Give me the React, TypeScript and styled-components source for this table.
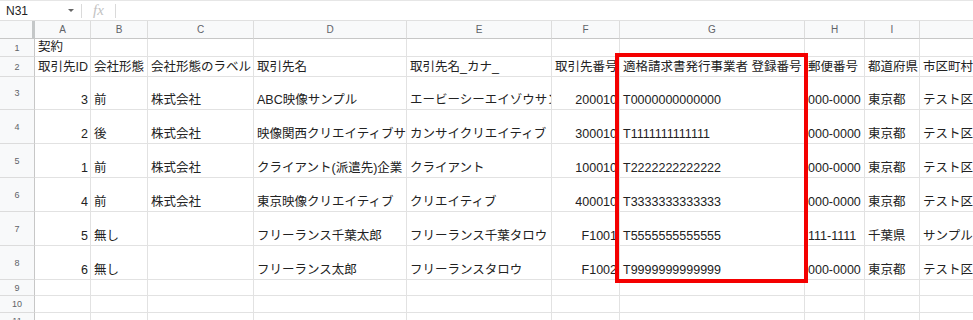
import styled, { createGlobalStyle } from 'styled-components';

const GlobalStyle = createGlobalStyle`
  html, body {
    margin: 0;
    padding: 0;
    background: #fff;
  }
  body {
    font-family: "Liberation Sans", "Noto Sans CJK JP", Arial, sans-serif;
    color: #222;
  }
`;

const columns = ['A', 'B', 'C', 'D', 'E', 'F', 'G', 'H', 'I', 'J'];
const colWidths = [56, 57, 106, 153, 145, 68, 185, 60, 55, 120];
const rowHeights = [18, 20, 33, 34, 34, 34, 34, 34, 16, 17, 17];

// right aligned columns: A (id), F (番号)
const rightCols = new Set([0, 5]);

const rows: string[][] = [
  ['契約'],
  ['取引先ID', '会社形態', '会社形態のラベル', '取引先名', '取引先名_カナ_', '取引先番号', '適格請求書発行事業者 登録番号', '郵便番号', '都道府県', '市区町村'],
  ['3', '前', '株式会社', 'ABC映像サンプル', 'エービーシーエイゾウサンプル', '200010', 'T0000000000000', '000-0000', '東京都', 'テスト区'],
  ['2', '後', '株式会社', '映像関西クリエイティブサンプル', 'カンサイクリエイティブ', '300010', 'T1111111111111', '000-0000', '東京都', 'テスト区'],
  ['1', '前', '株式会社', 'クライアント(派遣先)企業', 'クライアント', '100010', 'T2222222222222', '000-0000', '東京都', 'テスト区'],
  ['4', '前', '株式会社', '東京映像クリエイティブ', 'クリエイティブ', '400010', 'T3333333333333', '000-0000', '東京都', 'テスト区'],
  ['5', '無し', '', 'フリーランス千葉太郎', 'フリーランス千葉タロウ', 'F1001', 'T5555555555555', '111-1111', '千葉県', 'サンプル市'],
  ['6', '無し', '', 'フリーランス太郎', 'フリーランスタロウ', 'F1002', 'T9999999999999', '000-0000', '東京都', 'テスト区'],
  [],
  [],
  [],
];

const Sheet = styled.div`
  position: relative;
  width: 973px;
  height: 320px;
  overflow: hidden;
  background: #fff;
`;

const FormulaBar = styled.div`
  display: flex;
  align-items: center;
  height: 21px;
  box-sizing: border-box;
  border-top: 1px solid #e6e6e6;
  border-bottom: 1px solid #e0e0e0;
`;

const NameBox = styled.div`
  width: 62px;
  padding-left: 6px;
  font-size: 12px;
  color: #222;
`;

const Caret = styled.span`
  width: 0;
  height: 0;
  margin-right: 7px;
  border-left: 3px solid transparent;
  border-right: 3px solid transparent;
  border-top: 3px solid #666;
`;

const Divider = styled.span`
  width: 1px;
  height: 14px;
  background: #dadada;
`;

const Fx = styled.span`
  width: 33px;
  text-align: center;
  font-family: "Liberation Serif", serif;
  font-style: italic;
  font-size: 15px;
  line-height: 15px;
  color: #c2c2c2;
`;

const Grid = styled.div`
  display: grid;
  grid-template-columns: 35px ${colWidths.map((w) => `${w}px`).join(' ')};
  grid-template-rows: 18px ${rowHeights.map((h) => `${h}px`).join(' ')};
  width: max-content;
`;

const Corner = styled.div`
  box-sizing: border-box;
  background: #f8f9fa;
  border-right: 3px solid #c4c7c8;
  border-bottom: 1px solid #c7c7c7;
`;

const ColHeader = styled.div`
  box-sizing: border-box;
  display: flex;
  align-items: center;
  justify-content: center;
  background: #f8f9fa;
  border-right: 1px solid #dcdcdc;
  border-bottom: 1px solid #c7c7c7;
  font-size: 10px;
  color: #5f6368;
`;

const RowHeader = styled.div`
  box-sizing: border-box;
  display: flex;
  align-items: center;
  justify-content: center;
  background: #f8f9fa;
  border-right: 1px solid #c7c7c7;
  border-bottom: 1px solid #dcdcdc;
  font-size: 9px;
  color: #5f6368;
`;

const Cell = styled.div<{ $right?: boolean }>`
  box-sizing: border-box;
  display: flex;
  align-items: flex-end;
  justify-content: ${(p) => (p.$right ? 'flex-end' : 'flex-start')};
  padding: 0 ${(p) => (p.$right ? '2px' : '3px')} 1px 3px;
  overflow: hidden;
  white-space: nowrap;
  border-right: 1px solid #e2e2e2;
  border-bottom: 1px solid #e2e2e2;
  font-size: 12.5px;
  line-height: 15px;
  color: #222;
`;

const Highlight = styled.div`
  position: absolute;
  left: 615px;
  top: 53px;
  width: 193px;
  height: 230px;
  box-sizing: border-box;
  border: 4px solid #f40000;
  pointer-events: none;
`;

export default function App() {
  return (
    <>
      <GlobalStyle />
      <Sheet>
        <FormulaBar>
          <NameBox>N31</NameBox>
          <Caret />
          <Divider />
          <Fx>fx</Fx>
          <Divider />
        </FormulaBar>
        <Grid>
          <Corner />
          {columns.map((c) => (
            <ColHeader key={c}>{c}</ColHeader>
          ))}
          {rows.map((row, r) => [
            <RowHeader key={`h${r}`}>{r + 1}</RowHeader>,
            ...columns.map((c, i) => (
              <Cell key={`${r}-${c}`} $right={r > 1 && rightCols.has(i)}>
                {row[i] ?? ''}
              </Cell>
            )),
          ])}
        </Grid>
        <Highlight />
      </Sheet>
    </>
  );
}
